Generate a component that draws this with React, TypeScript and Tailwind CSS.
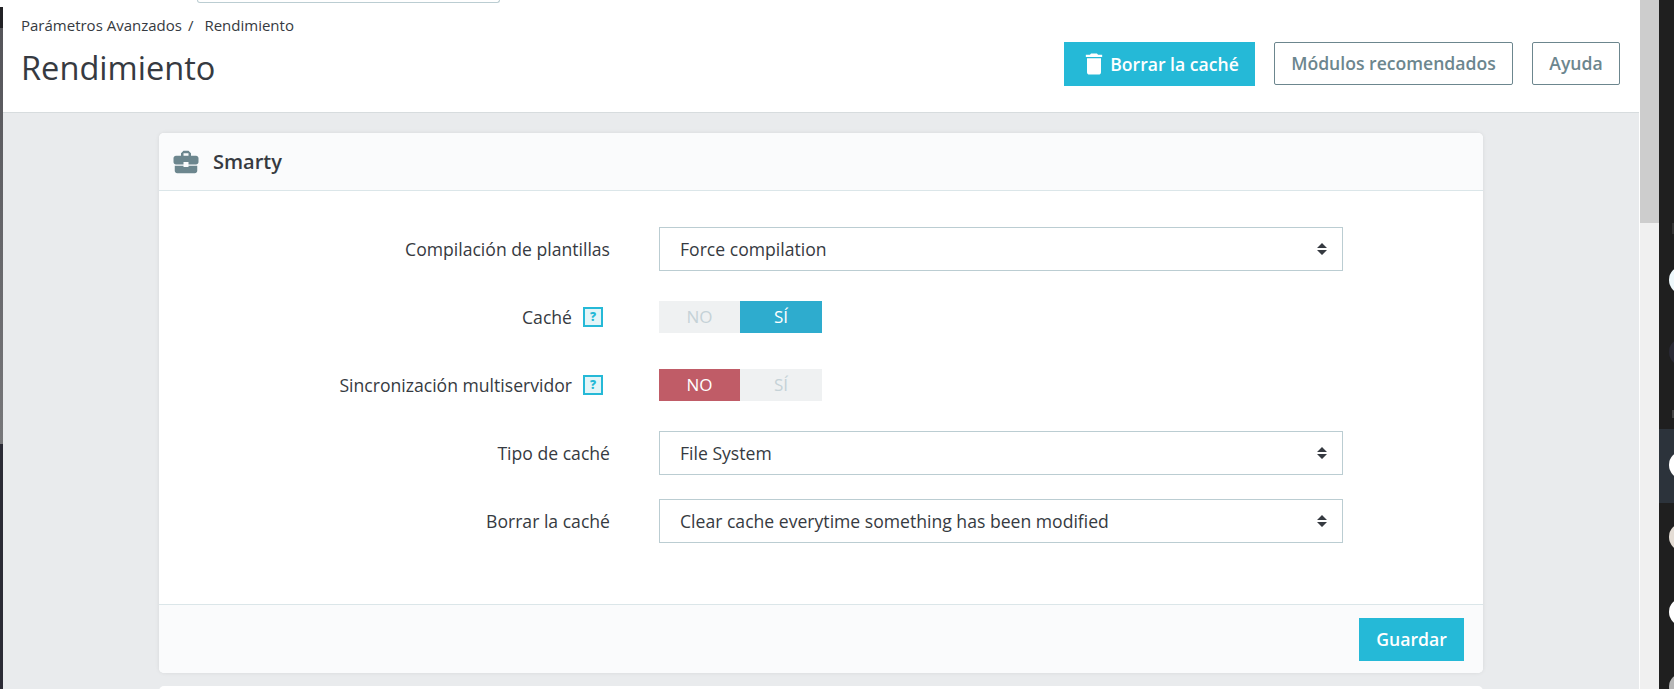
import React from "react";
import { MdBusinessCenter, MdDelete } from "react-icons/md";

function Arrows() {
  return (
    <svg width="10" height="12" viewBox="0 0 10 12" className="shrink-0">
      <path d="M5 0 L10 5 L0 5 Z M0 7 L10 7 L5 12 Z" fill="#363a41" />
    </svg>
  );
}

function SelectBox({ value }: { value: string }) {
  return (
    <div className="h-[44px] w-[684px] ml-[48px] border border-[#bbcdd2] bg-white pl-[20px] pr-[15px] flex items-center justify-between text-[17.6px] text-[#363a41]">
      <span>{value}</span>
      <Arrows />
    </div>
  );
}

function Label({ text, help }: { text: string; help?: boolean }) {
  return (
    <div className="w-[452px] shrink-0 flex items-center justify-end text-[17.6px] text-[#363a41]">
      <span className={help ? "" : "mr-[1px]"}>{text}</span>
      {help && (
        <span className="ml-[11px] mr-[8px] w-[20px] h-[20px] border-2 border-[#25b9d7] bg-[#e3f5f8] text-[#25b9d7] text-[12px] font-extrabold flex items-center justify-center leading-none">?</span>
      )}
    </div>
  );
}

function Toggle({ on }: { on: boolean }) {
  return (
    <div className="flex h-[32px] w-[163px] ml-[48px] text-[17px] leading-[32px] text-center">
      <div className={`w-[81px] ${on ? "bg-[#eff1f2] text-[#c5d2d7]" : "bg-[#c05c67] text-white"}`}>NO</div>
      <div className={`w-[82px] ${on ? "bg-[#2eacce] text-white" : "bg-[#eff1f2] text-[#c5d2d7]"}`}>SÍ</div>
    </div>
  );
}

function Avatar({ color, className }: { color: string; className: string }) {
  return <div className={`w-[28px] h-[28px] rounded-full ${color} ${className}`} />;
}

export default function App() {
  return (
    <div className="flex h-[689px] w-full overflow-hidden bg-white font-['Open_Sans',sans-serif]">
      <div className="w-[3px] shrink-0 flex flex-col">
        <div className="h-[7px] bg-white" />
        <div className="h-[21px] bg-[#222226]" />
        <div className="h-[416px] bg-gradient-to-b from-[#55555a] to-[#77777a]" />
        <div className="flex-1 bg-[#2b2b35]" />
      </div>

      <main className="w-[1636px] shrink-0 bg-[#e9ebed] overflow-hidden">
        <header className="h-[113px] bg-white border-b border-[#d7dcde]">
          <div className="ml-[194px] w-[303px] h-[3px] border-x border-b border-[#bbcdd2] rounded-b-[10px]" />
          <div className="flex justify-between pl-[18px] pr-[19px]">
            <div>
              <div className="mt-[13px] text-[15px] leading-[19px] text-[#363a41] flex">
                <span>Parámetros Avanzados</span>
                <span className="ml-[6px]">/</span>
                <span className="ml-[11px]">Rendimiento</span>
              </div>
              <h1 className="mt-[11px] text-[32.6px] leading-[44px] text-[#363a41]">Rendimiento</h1>
            </div>
            <div className="flex items-start pt-[39px] gap-[19px] text-[17.6px] font-semibold">
              <button className="h-[44px] w-[191px] bg-[#25b9d7] text-white flex items-center justify-center gap-[2px]">
                <MdDelete size={28} />
                <span>Borrar la caché</span>
              </button>
              <button className="h-[43px] w-[239px] border border-[#6c868e] rounded-[2px] text-[#6c868e]">Módulos recomendados</button>
              <button className="h-[43px] w-[88px] border border-[#6c868e] rounded-[2px] text-[#6c868e]">Ayuda</button>
            </div>
          </div>
        </header>

        <section className="ml-[156px] mt-[20px] w-[1324px] bg-white rounded-[5px] shadow-[0_0_4px_0_rgba(0,0,0,0.08)] overflow-hidden">
          <div className="h-[58px] bg-[#fafbfc] border-b border-[#dbe6e9] flex items-center pl-[12px] gap-[12px]">
            <MdBusinessCenter size={30} className="text-[#6c868e]" />
            <span className="pt-[1px] text-[20px] font-semibold text-[#363a41]">Smarty</span>
          </div>
          <div className="h-[413px] pt-[36px]">
            <div className="flex items-center">
              <Label text="Compilación de plantillas" />
              <SelectBox value="Force compilation" />
            </div>
            <div className="flex items-center mt-[30px]">
              <Label text="Caché" help />
              <Toggle on />
            </div>
            <div className="flex items-center mt-[36px]">
              <Label text="Sincronización multiservidor" help />
              <Toggle on={false} />
            </div>
            <div className="flex items-center mt-[30px]">
              <Label text="Tipo de caché" />
              <SelectBox value="File System" />
            </div>
            <div className="flex items-center mt-[24px]">
              <Label text="Borrar la caché" />
              <SelectBox value="Clear cache everytime something has been modified" />
            </div>
          </div>
          <div className="h-[69px] bg-[#fafbfc] border-t border-[#dbe6e9] flex justify-end pr-[19px] pt-[13px]">
            <button className="h-[43px] w-[105px] bg-[#25b9d7] text-white text-[17.6px] font-semibold">Guardar</button>
          </div>
        </section>
        <div className="ml-[156px] mt-[13px] w-[1324px] h-[20px] bg-white rounded-t-[5px]" />
      </main>

      <div className="w-[1px] shrink-0 bg-white" />
      <div className="w-[19px] shrink-0 bg-[#f0f0f0]">
        <div className="h-[223px] bg-[#cdcdcd]" />
      </div>
      <aside className="flex-1 bg-[#1f1f1f] overflow-hidden">
        <div className="h-[223px]" />
        <div className="ml-[13px] h-[11px] w-[3px] bg-[#333]" />
        <Avatar color="bg-[#eef8fb]" className="ml-[10px] mt-[32px]" />
        <Avatar color="bg-[#2a2a35]" className="ml-[10px] mt-[44px]" />
        <div className="h-[8px] mt-[44px] ml-[13px] w-[3px] bg-[#444]" />
        <div className="h-[74px] mt-[11px] bg-[#2c333b] pt-[22px]">
          <Avatar color="bg-white" className="ml-[10px]" />
        </div>
        <Avatar color="bg-[#e4ddd5]" className="ml-[10px] mt-[20px]" />
        <Avatar color="bg-white" className="ml-[10px] mt-[47px]" />
        <Avatar color="bg-[#b5b5b5]" className="ml-[10px] mt-[47px]" />
      </aside>
    </div>
  );
}
